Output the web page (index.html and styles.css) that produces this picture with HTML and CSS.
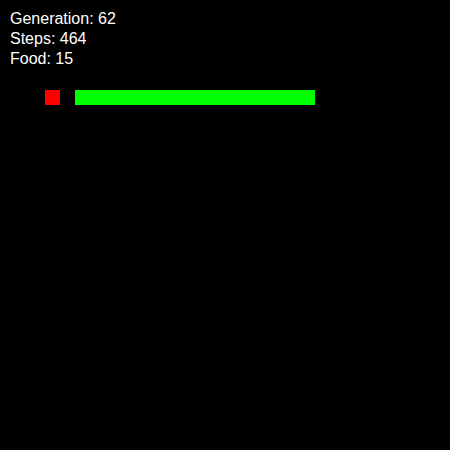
FILE: index.html
```html
<!DOCTYPE html>
<html>
<head>
<meta charset="utf-8">
<link rel="stylesheet" href="styles.css">
</head>
<body>
<div class="game">
  <div class="board">
    <div class="food"></div>
    <div class="snake"></div>
  </div>
  <div class="hud">
    <div class="line">Generation: 62</div>
    <div class="line">Steps: 464</div>
    <div class="line">Food: 15</div>
  </div>
</div>
</body>
</html>
```
FILE: styles.css
```css
html, body {
  margin: 0;
  padding: 0;
  background: #000;
}
.game {
  position: relative;
  width: 450px;
  height: 450px;
  background: #000;
  overflow: hidden;
}
.board {
  display: grid;
  grid-template-columns: repeat(30, 15px);
  grid-template-rows: repeat(30, 15px);
  width: 450px;
  height: 450px;
}
.food {
  grid-column: 4;
  grid-row: 7;
  background: #ff0000;
}
.snake {
  grid-column: 6 / 22;
  grid-row: 7;
  background: #00ff00;
}
.hud {
  position: absolute;
  left: 10px;
  top: 9px;
  font-family: "Liberation Sans", Arial, sans-serif;
  font-size: 16px;
  line-height: 20px;
  color: #fff;
}
```
